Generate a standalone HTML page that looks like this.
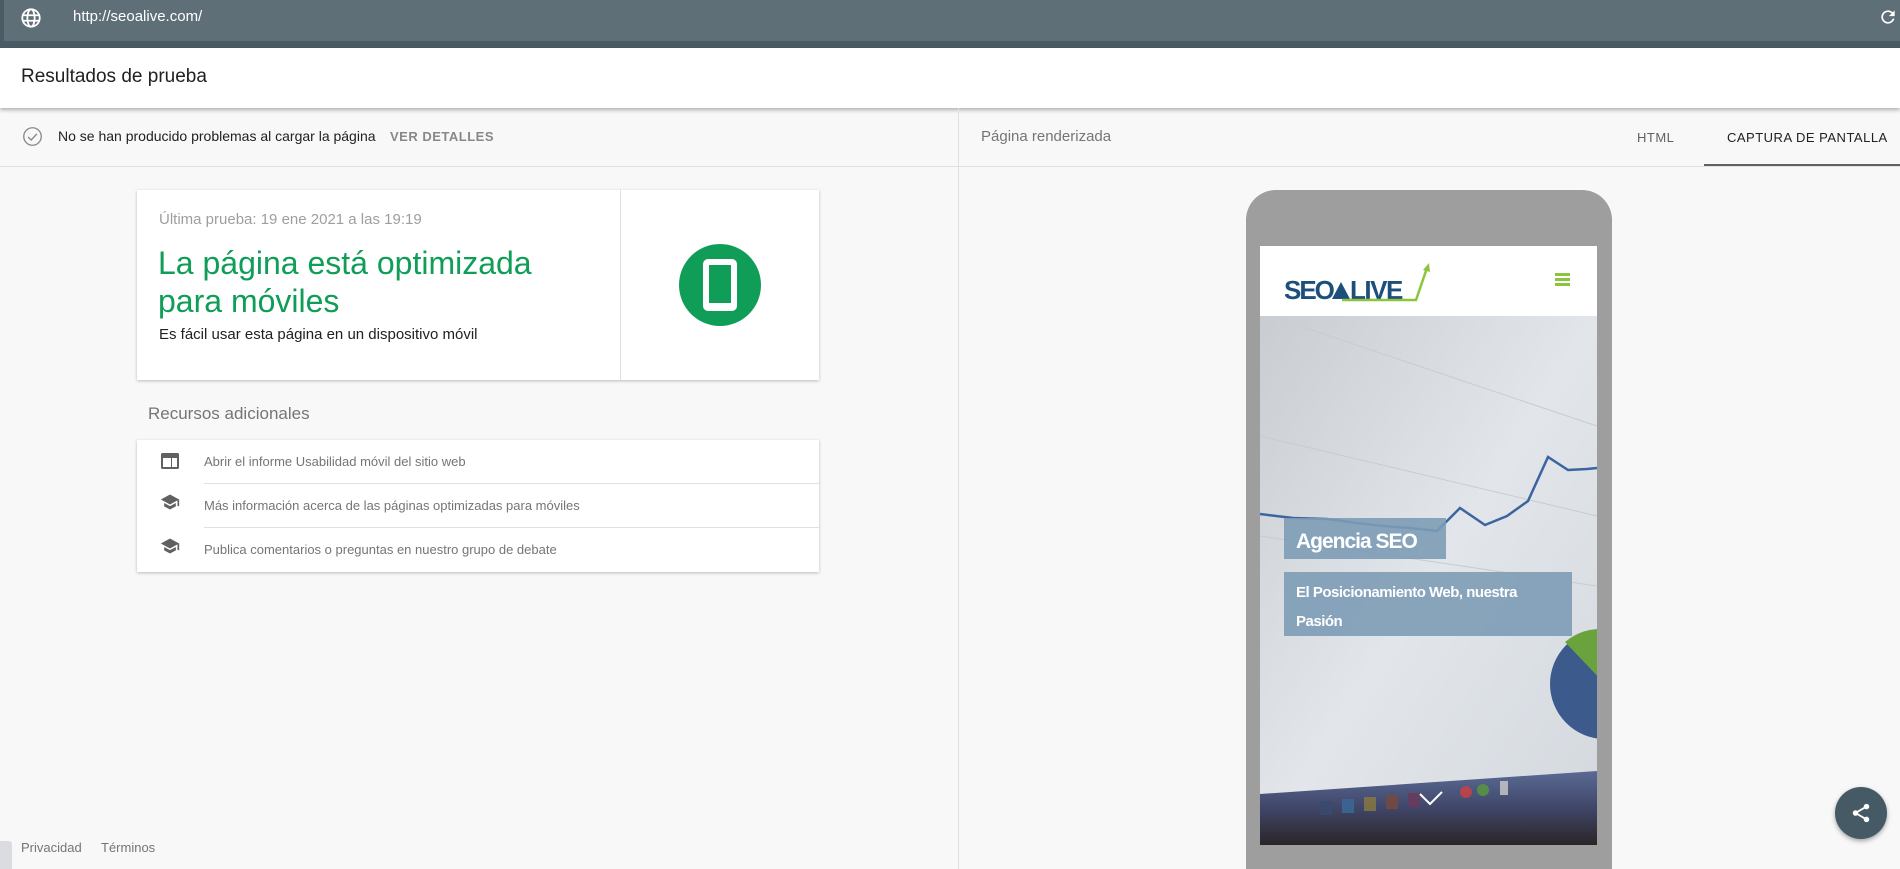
<!DOCTYPE html>
<html style="width:1900px;height:869px;overflow:hidden"><head><meta charset="utf-8"><style>
*{margin:0;padding:0;box-sizing:border-box}
body{width:1900px;height:869px;overflow:hidden;background:#f8f8f8;font-family:"Liberation Sans",sans-serif;position:relative}
.abs{position:absolute}
</style></head><body>
<div class="abs" style="left:0;top:0;width:1900px;height:41px;background:#5f6f78"></div>
<div class="abs" style="left:0;top:41px;width:1900px;height:7px;background:#4a5b65"></div>
<div class="abs" style="left:0;top:0;width:4px;height:41px;background:#4a5b65"></div>
<svg class="abs" style="left:20px;top:7px" width="22" height="22" viewBox="0 0 24 24"><circle cx="12" cy="12" r="9.5" fill="none" stroke="#fff" stroke-width="2"/><ellipse cx="12" cy="12" rx="4" ry="9.5" fill="none" stroke="#fff" stroke-width="2"/><path d="M3 9h18M3 15h18" stroke="#fff" stroke-width="2"/></svg>
<div class="abs" style="left:73px;top:8px;color:#fff;font-size:15px">http://seoalive.com/</div>
<svg class="abs" style="left:1878px;top:7px" width="20" height="20" viewBox="0 0 24 24"><path d="M17.65 6.35A7.950 7.95 0 0 0 12 4a8 8 0 1 0 7.73 10h-2.08A6 6 0 1 1 12 6c1.66 0 3.140.69 4.220 1.78L13 11h7V4z" fill="#fff"/></svg>
<div class="abs" style="left:0;top:48px;width:1900px;height:60px;background:#fff;box-shadow:0 2px 4px rgba(0,0,0,.3)"></div>
<div class="abs" style="left:21px;top:66px;font-size:19px;color:#212121">Resultados de prueba</div>
<div class="abs" style="left:958px;top:108px;width:1px;height:761px;background:#e0e0e0"></div>
<div class="abs" style="left:0;top:166px;width:1900px;height:1px;background:#e0e0e0"></div>
<svg class="abs" style="left:22px;top:126px" width="21" height="21" viewBox="0 0 24 24"><circle cx="12" cy="12" r="10" fill="none" stroke="#888" stroke-width="1.5"/><path d="M7 12.5l3.5 3.5L17 9" fill="none" stroke="#888" stroke-width="1.5"/></svg>
<div class="abs" style="left:58px;top:128px;font-size:14px;color:#212121">No se han producido problemas al cargar la página</div>
<div class="abs" style="left:390px;top:129px;font-size:13px;color:#888;font-weight:bold;letter-spacing:.5px">VER DETALLES</div>
<div class="abs" style="left:981px;top:128px;font-size:15px;color:#757575">Página renderizada</div>
<div class="abs" style="left:1637px;top:130px;font-size:13px;color:#616161;letter-spacing:.5px">HTML</div>
<div class="abs" style="left:1727px;top:130px;font-size:13px;color:#212121;letter-spacing:.5px">CAPTURA DE PANTALLA</div>
<div class="abs" style="left:1704px;top:164px;width:196px;height:2px;background:#616161"></div>
<div class="abs" style="left:137px;top:190px;width:682px;height:190px;background:#fff;box-shadow:0 1px 3px rgba(0,0,0,.25)"></div>
<div class="abs" style="left:620px;top:190px;width:1px;height:190px;background:#e0e0e0"></div>
<div class="abs" style="left:159px;top:211px;font-size:15px;color:#9e9e9e">Última prueba: 19 ene 2021 a las 19:19</div>
<div class="abs" style="left:158px;top:244px;font-size:32px;line-height:38px;color:#0f9d58">La página está optimizada<br>para móviles</div>
<div class="abs" style="left:159px;top:326px;font-size:15px;color:#212121">Es fácil usar esta página en un dispositivo móvil</div>
<div class="abs" style="left:679px;top:244px;width:82px;height:82px;border-radius:50%;background:#0f9d58"></div>
<div class="abs" style="left:703px;top:259px;width:34px;height:52px;border-radius:5px;background:#fff"></div>
<div class="abs" style="left:709px;top:265px;width:22px;height:38px;background:#0f9d58"></div>
<div class="abs" style="left:148px;top:404px;font-size:17px;color:#757575">Recursos adicionales</div>
<div class="abs" style="left:137px;top:440px;width:682px;height:132px;background:#fff;box-shadow:0 1px 3px rgba(0,0,0,.25)"></div>
<div class="abs" style="left:204px;top:483px;width:615px;height:1px;background:#e0e0e0"></div>
<div class="abs" style="left:204px;top:527px;width:615px;height:1px;background:#e0e0e0"></div>
<svg class="abs" style="left:160px;top:452px" width="20" height="18" viewBox="0 0 20 18"><rect x="1" y="1" width="18" height="16" rx="1.5" fill="#616161"/><rect x="3" y="6" width="8" height="9" fill="#fff"/><rect x="12" y="6" width="5" height="9" fill="#fff"/></svg>
<svg class="abs" style="left:159px;top:492px" width="22" height="20" viewBox="0 0 24 24"><path d="M5 13.18v4L12 21l7-3.82v-4L12 17l-7-3.820zM12 3L1 9l11 6 9-4.910V17h2V9L12 3z" fill="#616161"/></svg>
<svg class="abs" style="left:159px;top:536px" width="22" height="20" viewBox="0 0 24 24"><path d="M5 13.18v4L12 21l7-3.82v-4L12 17l-7-3.820zM12 3L1 9l11 6 9-4.910V17h2V9L12 3z" fill="#616161"/></svg>
<div class="abs" style="left:204px;top:454px;font-size:13px;color:#757575">Abrir el informe Usabilidad móvil del sitio web</div>
<div class="abs" style="left:204px;top:498px;font-size:13px;color:#757575">Más información acerca de las páginas optimizadas para móviles</div>
<div class="abs" style="left:204px;top:542px;font-size:13px;color:#757575">Publica comentarios o preguntas en nuestro grupo de debate</div>
<div class="abs" style="left:0;top:841px;width:12px;height:28px;background:#dadce0;border-radius:0 3px 0 0"></div>
<div class="abs" style="left:21px;top:840px;font-size:13px;color:#757575">Privacidad</div>
<div class="abs" style="left:101px;top:840px;font-size:13px;color:#757575">Términos</div>
<div class="abs" style="left:1246px;top:190px;width:366px;height:679px;border-radius:30px 30px 0 0;background:#9e9e9e"></div>
<div class="abs" style="left:1260px;top:246px;width:337px;height:70px;background:#fff"></div>
<svg class="abs" style="left:1284px;top:262px" width="150" height="40" viewBox="0 0 150 40">
<text x="0" y="37" font-family="Liberation Sans" font-weight="bold" font-size="26" fill="#1d4f7c" letter-spacing="-2" transform="scale(1,1)">SEO</text>
<path d="M48 37 L57 20 L66 37" fill="#1d4f7c"/>
<text x="66" y="37" font-family="Liberation Sans" font-weight="bold" font-size="26" fill="#1d4f7c" letter-spacing="-1.5">LIVE</text>
<path d="M58 38 L132 38 L143 6" fill="none" stroke="#8bc53f" stroke-width="2.5"/><path d="M139 8 L145 1 L146 10z" fill="#8bc53f"/>
</svg>
<div class="abs" style="left:1555px;top:273px;width:15px;height:3px;background:#8bc53f;box-shadow:0 5px 0 #8bc53f,0 10px 0 #8bc53f"></div>
<svg class="abs" style="left:1260px;top:316px" width="337" height="529" viewBox="0 0 337 529">
<defs><linearGradient id="bg" x1="0" y1="0" x2="1" y2="1"><stop offset="0" stop-color="#c9cdd2"/><stop offset=".5" stop-color="#e2e6ea"/><stop offset="1" stop-color="#d3d8de"/></linearGradient>
<linearGradient id="dk" x1="0" y1="0" x2="0" y2="1"><stop offset="0" stop-color="#5a6a95"/><stop offset=".5" stop-color="#404668"/><stop offset="1" stop-color="#2a2528"/></linearGradient></defs>
<rect width="337" height="529" fill="url(#bg)"/>
<path d="M40 10 L337 110 M0 120 L337 200 M0 220 L337 270" stroke="#c8ccd2" stroke-width="1"/>
<path d="M0 478 L337 455 L337 529 L0 529z" fill="url(#dk)"/>
<g opacity=".8"><rect x="60" y="485" width="12" height="14" fill="#3a4a70"/><rect x="82" y="483" width="12" height="14" fill="#3a6a9a"/><rect x="104" y="481" width="12" height="14" fill="#8a7a40"/><rect x="126" y="479" width="12" height="14" fill="#7a4a3a"/><rect x="148" y="477" width="12" height="14" fill="#6a3a5a"/><circle cx="206" cy="476" r="6" fill="#d04040"/><circle cx="223" cy="474" r="6" fill="#5a9a3a"/><rect x="240" y="465" width="8" height="14" fill="#ccc"/></g>
<circle cx="345" cy="368" r="55" fill="#3d5a8c"/>
<path d="M345 368 L305 326 A55 55 0 0 1 345 313z" fill="#6aa33d"/>
<polyline points="0,198 33,202 67,203 97,207 123,210 150,212 177,215 200,192 225,209 247,200 268,185 288,141 308,154 327,153 337,152" fill="none" stroke="#3b64a0" stroke-width="2.5"/>
<rect x="24" y="202" width="162" height="41" fill="#7d9cb6" opacity=".9"/>
<rect x="24" y="256" width="288" height="64" fill="#7d9cb6" opacity=".9"/>
<text x="36" y="232" font-family="Liberation Sans" font-weight="bold" font-size="21" fill="#fff" letter-spacing="-1">Agencia SEO</text>
<text x="36" y="281" font-family="Liberation Sans" font-weight="bold" font-size="15" fill="#fff" letter-spacing="-.5">El Posicionamiento Web, nuestra</text>
<text x="36" y="310" font-family="Liberation Sans" font-weight="bold" font-size="15" fill="#fff" letter-spacing="-.5">Pasión</text>
<path d="M160 478 L170 488 L182 476" fill="none" stroke="#fff" stroke-width="2"/>
</svg>
<div class="abs" style="left:1835px;top:787px;width:52px;height:52px;border-radius:50%;background:#455a64;box-shadow:0 2px 5px rgba(0,0,0,.35)"></div>
<svg class="abs" style="left:1850px;top:802px" width="22" height="22" viewBox="0 0 24 24"><circle cx="18" cy="5" r="3" fill="#fff"/><circle cx="6" cy="12" r="3" fill="#fff"/><circle cx="18" cy="19" r="3" fill="#fff"/><path d="M18 5L6 12L18 19" stroke="#fff" stroke-width="2" fill="none"/></svg>
</body></html>
